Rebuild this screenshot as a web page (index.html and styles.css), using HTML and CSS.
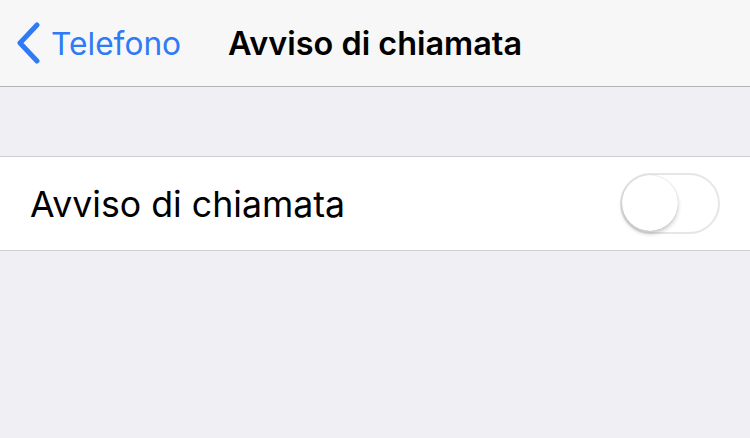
FILE: index.html
```html
<!DOCTYPE html>
<html lang="it">
<head>
<meta charset="utf-8">
<link rel="stylesheet" href="styles.css">
</head>
<body>
<header class="navbar">
  <a class="back">
    <svg class="chevron" width="28" height="42" viewBox="0 0 28 42"><path d="M22 3 L5 21 L22 39" fill="none" stroke="#2f7bf5" stroke-width="5" stroke-linecap="round" stroke-linejoin="round"/></svg>
    <span class="back-label">Telefono</span>
  </a>
  <h1 class="title">Avviso di chiamata</h1>
  <span></span>
</header>
<div class="spacer"></div>
<section class="group">
  <div class="row">
    <span class="row-label">Avviso di chiamata</span>
    <span class="switch"><span class="knob"></span></span>
  </div>
</section>
</body>
</html>
```
FILE: styles.css
```css
html, body {
  margin: 0;
  padding: 0;
  background: #efeff4;
  font-family: Inter, "Liberation Sans", Arial, sans-serif;
  width: 750px;
  height: 438px;
  overflow: hidden;
}
.navbar {
  height: 86px;
  background: #f7f7f7;
  border-bottom: 1px solid #b3b3b6;
  display: grid;
  grid-template-columns: 1fr auto 1fr;
  align-items: center;
  padding-left: 15px;
  padding-right: 15px;
}
.back {
  display: flex;
  align-items: center;
  color: #2f7bf5;
}
.chevron {
  display: block;
  margin-right: 8px;
}
.back-label {
  font-size: 31.7px;
}
.title {
  margin: 0;
  font-size: 32.4px;
  font-weight: 600;
  color: #000;
}
.spacer {
  height: 69px;
}
.group {
  background: #fff;
  border-top: 1px solid #cfced3;
  border-bottom: 1px solid #cfced3;
}
.row {
  height: 93px;
  display: flex;
  align-items: center;
  justify-content: space-between;
  padding: 0 30px 0 30px;
}
.row-label {
  font-size: 35.7px;
  color: #000;
}
.switch {
  position: relative;
  width: 96px;
  height: 57px;
  border: 2px solid #e6e6e6;
  border-radius: 31px;
  background: #fff;
}
.knob {
  position: absolute;
  left: 0;
  top: 0;
  width: 56px;
  height: 56px;
  border-radius: 50%;
  background: #fff;
  box-shadow: 0 3px 4px rgba(0,0,0,0.2), 0 0 1px rgba(0,0,0,0.25);
}
```
